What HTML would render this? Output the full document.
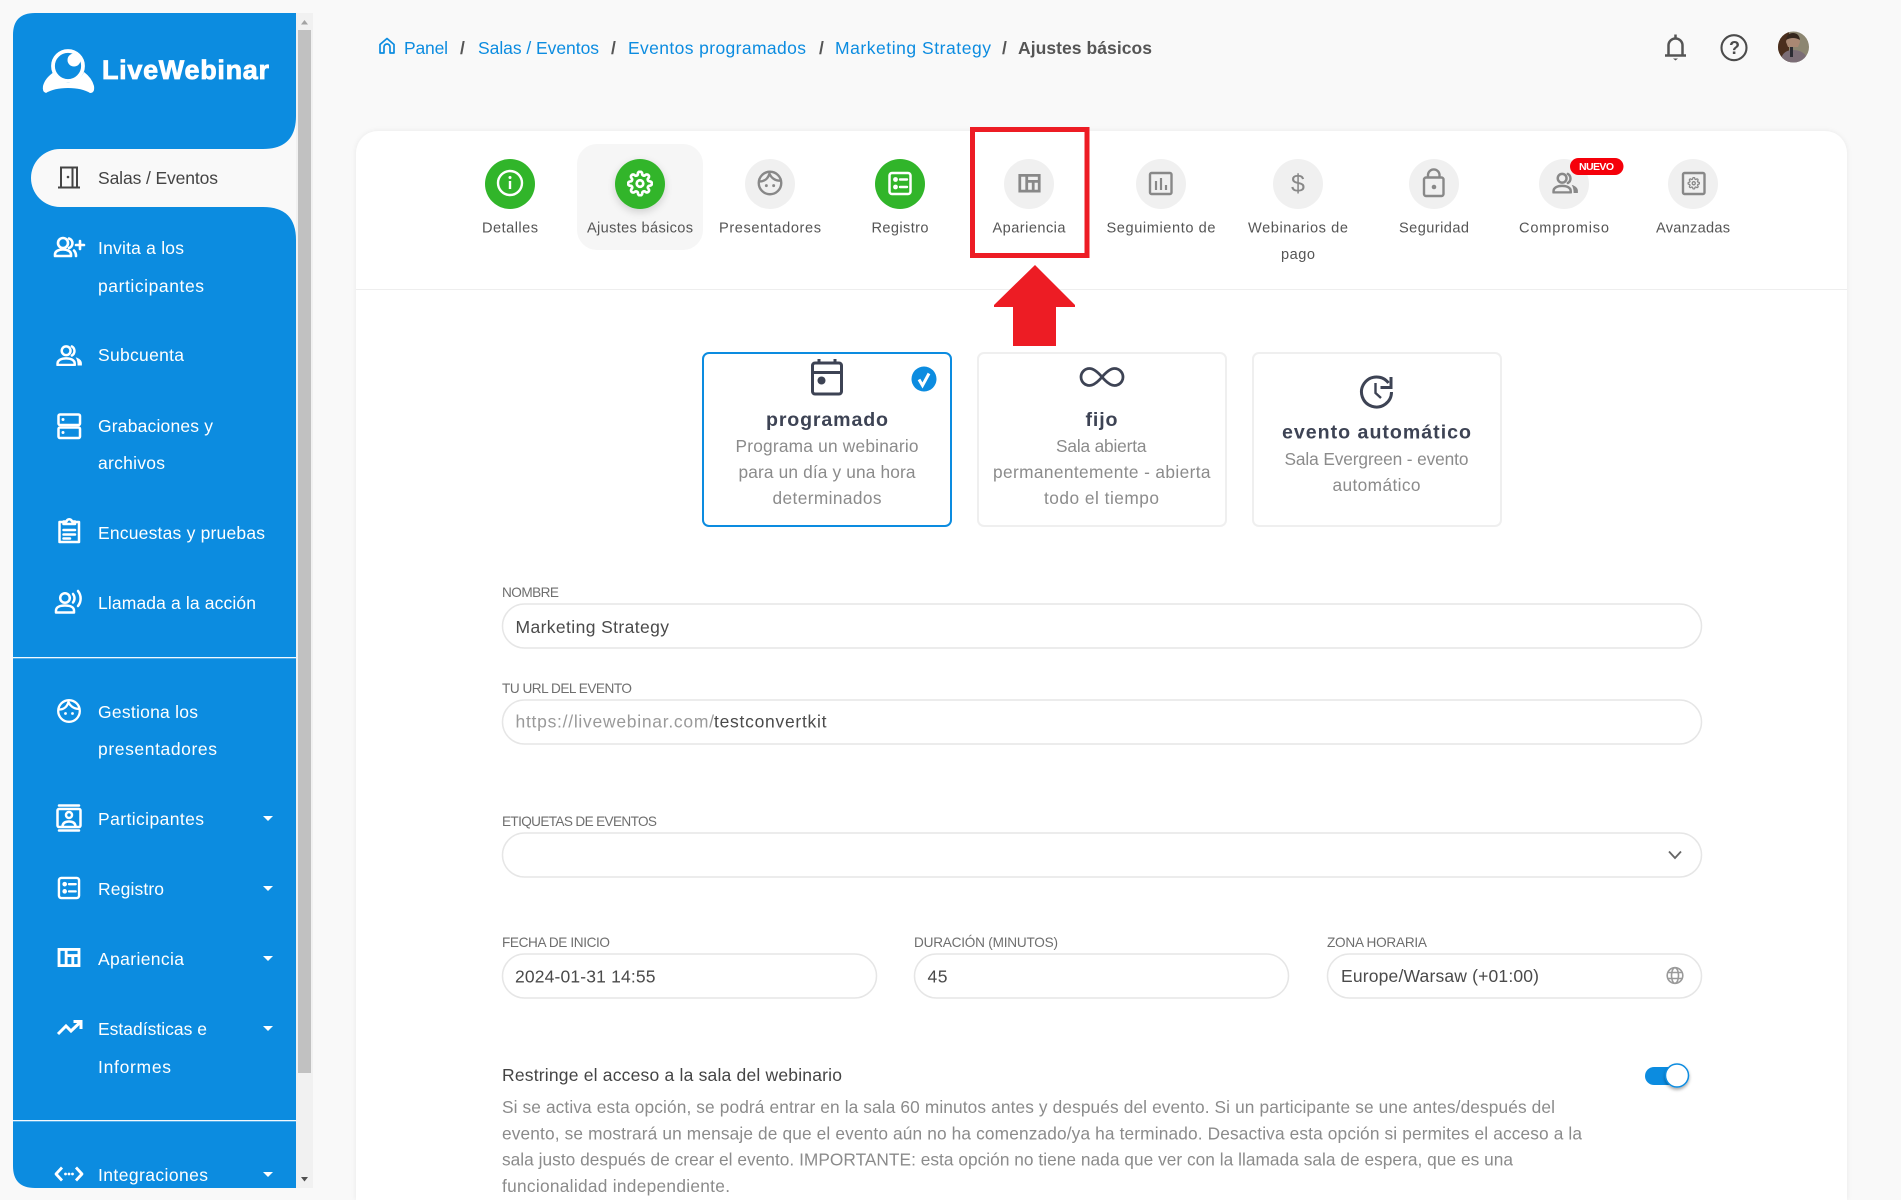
<!DOCTYPE html>
<html lang="es">
<head>
<meta charset="utf-8">
<title>Ajustes básicos</title>
<style>
html{margin:0;padding:0;width:1901px;height:1200px;overflow:hidden;background:#f9f9f9}
body{margin:0;padding:0;width:1901px;height:1200px;overflow:hidden;position:relative;background:#f9f9f9;font-family:"Liberation Sans",sans-serif}
.card{position:absolute;left:356px;top:131px;width:1491px;height:1069px;background:#fff;border-radius:22px 22px 0 0;box-shadow:0 0 6px rgba(0,0,0,.07)}
svg{position:absolute;left:0;top:0;display:block}
text{font-family:"Liberation Sans",sans-serif;font-size:17.5px}
.s text{fill:#fff}
.bc{fill:#0c8ce0}
.tab{font-size:14.6px;fill:#555}
.d{fill:#8b8b8b;font-size:17.3px}
.t{fill:#3d4354;font-size:19.6px;font-weight:bold}
.l{fill:#6e6e6e;font-size:13.6px}
.v{fill:#4a4a4a;font-size:17.5px}
.i{fill:#fff;stroke:#e6e6e6;stroke-width:1.5}
.o{fill:none;stroke:currentColor;stroke-width:2.2;stroke-linecap:round;stroke-linejoin:round}
</style>
</head>
<body>
<div class="card"></div>
<svg width="1901" height="1200" viewBox="0 0 1901 1200" xmlns="http://www.w3.org/2000/svg">
<defs>
<symbol id="face" viewBox="0 0 24 24"><g class="o" style="stroke-width:2.300"><circle cx="12" cy="12" r="10.800"/><path d="M2.500 10.500C6.500 10.500 10 8 11.500 3 13 7 17 9.800 21.500 9.800"/></g><circle cx="8.500" cy="14.500" r="1.400" fill="currentColor"/><circle cx="15.500" cy="14.500" r="1.400" fill="currentColor"/></symbol>
<symbol id="list" viewBox="0 0 24 24"><rect x="1.500" y="1.500" width="21" height="21" rx="2.500" class="o" style="stroke-width:2.500"/><circle cx="7.500" cy="8" r="2.400" fill="currentColor"/><circle cx="7.500" cy="15.500" r="2.400" fill="currentColor"/><path d="M12 8H19M12 15.500H19" class="o" style="stroke-width:2.400"/></symbol>
<symbol id="layout" viewBox="0 0 24 20"><path d="M1.500 1.500H22.500V18.500H1.500ZM9 1.500V18.500M9 8H22.500M16 8V18.500" fill="none" stroke="currentColor" stroke-width="3"/></symbol>
<symbol id="people" viewBox="0 0 28 22"><g class="o" style="stroke-width:2.600"><circle cx="11" cy="6" r="4.600"/><path d="M2 21V19.500C2 16 6 14 11 14S20 16 20 19.500V21Z"/><path d="M17 1.500A5.500 5.500 0 0 1 17 11"/></g><path d="M21 13C25 14 27.500 16.500 27.500 19V21.500H23C23 18 22.500 15.500 21 13Z" fill="currentColor"/></symbol>
<symbol id="gear" viewBox="0 0 24 24"><g fill="none" stroke="currentColor" stroke-width="2.500" stroke-linejoin="round"><circle cx="12" cy="12" r="3"/><path d="M19.400 15a1.650 1.650 0 0 0 .33 1.820l.06.06a2 2 0 0 1 0 2.830 2 2 0 0 1-2.830 0l-.06-.06a1.650 1.650 0 0 0-1.820-.33 1.650 1.650 0 0 0-1 1.510V21a2 2 0 0 1-2 2 2 2 0 0 1-2-2v-.09A1.650 1.650 0 0 0 9 19.400a1.650 1.650 0 0 0-1.820.33l-.06.06a2 2 0 0 1-2.830 0 2 2 0 0 1 0-2.830l.06-.06a1.650 1.650 0 0 0 .33-1.820 1.650 1.650 0 0 0-1.510-1H3a2 2 0 0 1-2-2 2 2 0 0 1 2-2h.09A1.650 1.650 0 0 0 4.600 9a1.650 1.650 0 0 0-.33-1.820l-.06-.06a2 2 0 0 1 0-2.830 2 2 0 0 1 2.830 0l.06.06a1.650 1.650 0 0 0 1.820.33H9a1.650 1.650 0 0 0 1-1.510V3a2 2 0 0 1 2-2 2 2 0 0 1 2 2v.09a1.650 1.650 0 0 0 1 1.510 1.650 1.650 0 0 0 1.820-.33l.06-.06a2 2 0 0 1 2.830 0 2 2 0 0 1 0 2.830l-.06.06a1.650 1.650 0 0 0-.33 1.820V9a1.650 1.650 0 0 0 1.510 1H21a2 2 0 0 1 2 2 2 2 0 0 1-2 2h-.09a1.650 1.650 0 0 0-1.510 1z"/></g></symbol>
<clipPath id="clipS"><rect x="0" y="0" width="296" height="1188"/></clipPath>
<clipPath id="clipA"><circle cx="1793.500" cy="47" r="15.500"/></clipPath>
<filter id="sh" x="-40%" y="-40%" width="180%" height="180%"><feDropShadow dx="0" dy="3" stdDeviation="4" flood-color="#000" flood-opacity=".16"/></filter>
<filter id="sh2" x="-40%" y="-40%" width="180%" height="180%"><feDropShadow dx="0" dy="2" stdDeviation="1.500" flood-color="#000" flood-opacity=".35"/></filter>
</defs>

<!-- scrollbar -->
<rect x="296" y="13" width="17" height="1175" fill="#f1f1f1"/>
<rect x="298" y="30" width="13" height="1043" fill="#c1c1c1"/>
<path d="M301 24.500L304.500 20 308 24.500Z" fill="#a3a3a3"/>
<path d="M301 1177L304.500 1181.500 308 1177Z" fill="#505050"/>

<!-- sidebar -->
<path d="M35 13H296V116Q296 149 263 149H60A29 29 0 0 0 60 207H263Q296 207 296 240V1188H35Q13 1188 13 1166V35Q13 13 35 13Z" fill="#0c8ce0"/>
<rect x="13" y="657" width="283" height="1.300" fill="#fff" opacity=".95"/>
<rect x="13" y="1120" width="283" height="1.300" fill="#fff" opacity=".95"/>

<!-- logo -->
<g fill="#fff">
<path d="M46 93Q42 92 43 86Q45 78 54 72Q58 81 68 83Q80 81 84 72Q92 78 94 86Q95 93 90 93Q82 88 68 88Q54 88 46 93Z"/>
<circle cx="68" cy="66" r="15" fill="none" stroke="#fff" stroke-width="3.800"/>
<circle cx="74" cy="60" r="6.500"/>
<text x="102" y="79" font-weight="bold" stroke="#fff" stroke-width=".8" style="font-size:27px" textLength="167" lengthAdjust="spacing">LiveWebinar</text>
</g>

<g class="s" clip-path="url(#clipS)">
<text x="98" y="184" style="fill:#444" textLength="120">Salas / Eventos</text>
<text x="98" y="254" textLength="86">Invita a los</text>
<text x="98" y="292" textLength="106">participantes</text>
<text x="98" y="361" textLength="86">Subcuenta</text>
<text x="98" y="432" textLength="115">Grabaciones y</text>
<text x="98" y="469" textLength="67">archivos</text>
<text x="98" y="539" textLength="167">Encuestas y pruebas</text>
<text x="98" y="609" textLength="158">Llamada a la acción</text>
<text x="98" y="718" textLength="100">Gestiona los</text>
<text x="98" y="755" textLength="119">presentadores</text>
<text x="98" y="825" textLength="106">Participantes</text>
<text x="98" y="895" textLength="66">Registro</text>
<text x="98" y="965" textLength="86">Apariencia</text>
<text x="98" y="1035" textLength="109">Estadísticas e</text>
<text x="98" y="1073" textLength="73">Informes</text>
<text x="98" y="1181" textLength="110">Integraciones</text>

<!-- carets -->
<g fill="#fff">
<path d="M263 816H273L268 821Z"/><path d="M263 886H273L268 891Z"/><path d="M263 956H273L268 961Z"/><path d="M263 1026H273L268 1031Z"/><path d="M263 1172H273L268 1177Z"/>
</g>

<!-- door -->
<path d="M58 187.500H80M61 187.500V167.500H72.500V187.500M72.500 167.500H77V187.500" fill="none" stroke="#444" stroke-width="2"/>
<circle cx="68" cy="177" r="1.300" fill="#444"/>

<g color="#fff">
<!-- invite -->
<g class="o" style="stroke-width:2.600">
<circle cx="63" cy="243" r="5"/><path d="M55 256V254.500C55 251 59 249.500 63 249.500S71 251 71 254.500V256Z"/><path d="M69 238.500A5 5 0 0 1 69 248M74 250.500C75.500 252 76 253.500 76 256"/><path d="M76 245H84M80 241V249"/>
</g>
<!-- subaccount -->
<use href="#people" x="55" y="345" width="28" height="21"/>
<!-- recordings -->
<g fill="none" stroke="#fff" stroke-width="2.500"><rect x="58.500" y="414.500" width="21.500" height="10.500" rx="1.500"/><rect x="58.500" y="427.500" width="21.500" height="10.500" rx="1.500"/></g>
<circle cx="63" cy="419.500" r="1.500" fill="#fff"/><circle cx="63" cy="432.500" r="1.500" fill="#fff"/>
<!-- surveys -->
<g class="o" style="stroke-width:2.500"><path d="M63.500 522H59.500V542H79V522H75M63.500 524V521.500H66.500A2.800 2.800 0 0 1 72 521.500H75V524Z"/><path d="M63.500 530H75M63.500 534.500H75M63.500 538.500H70"/></g>
<!-- cta -->
<g class="o" style="stroke-width:2.500"><circle cx="65" cy="598" r="4.800"/><path d="M56 612.500V610.500C56 607 60 605.500 65 605.500S74 607 74 610.500V612.500Z"/><path d="M73 594C75 596.500 75 600 73 602.500M78 591C81.500 595.500 81.500 601.500 78 606"/></g>
<!-- presenters -->
<use href="#face" x="57" y="699" width="24" height="24"/>
<!-- participants -->
<g class="o" style="stroke-width:2.500"><path d="M59 805.500H79M59 830.500H79"/><rect x="57.500" y="809" width="23" height="18" rx="1.500"/><circle cx="69" cy="815" r="3"/><path d="M62.500 826C63 822.500 65.500 821.500 69 821.500S75 822.500 75.500 826"/></g>
<!-- register -->
<use href="#list" x="57.500" y="876.500" width="23" height="23" style="color:#fff"/>
<!-- look -->
<use href="#layout" x="57.500" y="948" width="23" height="19"/>
<!-- stats -->
<path d="M58 1034L66 1026 71 1031 80.500 1022M73.500 1021.500H81V1029" fill="none" stroke="#fff" stroke-width="3"/>
<!-- integr -->
<g class="o" style="stroke-width:2.800;stroke-linecap:butt"><path d="M62 1167.500L56 1174 62 1180.500M76 1167.500L82 1174 76 1180.500"/></g>
<circle cx="65.500" cy="1174" r="1.400" fill="#fff"/><circle cx="69" cy="1174" r="1.400" fill="#fff"/><circle cx="72.500" cy="1174" r="1.400" fill="#fff"/>
</g>
</g>

<!-- breadcrumb -->
<path d="M380 53V44.500L387 38.500 394 44.500V53H390V47A3 3 0 0 0 384 47V53Z" fill="none" stroke="#0c8ce0" stroke-width="1.700" stroke-linejoin="round"/>
<g>
<text class="bc" x="404" y="54" textLength="44">Panel</text>
<text x="460" y="54" fill="#555" font-weight="bold">/</text>
<text class="bc" x="478" y="54" textLength="121">Salas / Eventos</text>
<text x="611" y="54" fill="#555" font-weight="bold">/</text>
<text class="bc" x="628" y="54" textLength="178">Eventos programados</text>
<text x="819" y="54" fill="#555" font-weight="bold">/</text>
<text class="bc" x="835" y="54" textLength="156">Marketing Strategy</text>
<text x="1002" y="54" fill="#555" font-weight="bold">/</text>
<text x="1018" y="54" fill="#555" font-weight="bold" textLength="134">Ajustes básicos</text>
</g>

<!-- top right -->
<g fill="none" stroke="#555" stroke-width="2.500"><path d="M1665 55.500H1686M1668.500 55V45.500A7 7 0 0 1 1682.500 45.500V55"/><path d="M1675.500 34.500V38"/></g>
<path d="M1673 58.500H1678L1675.500 60.500Z" fill="#555"/>
<circle cx="1734" cy="47.700" r="12.500" fill="none" stroke="#4c4c4c" stroke-width="2.100"/>
<text x="1729" y="54" fill="#4c4c4c" font-weight="bold" style="font-size:18px">?</text>
<g clip-path="url(#clipA)">
<rect x="1778" y="31" width="32" height="32" fill="#8c8671"/>
<rect x="1778" y="31" width="11" height="32" fill="#4b2f1e"/>
<path d="M1786 42Q1787 35 1793 35Q1799 35 1800 42L1798 47H1788Z" fill="#a98873"/>
<path d="M1786 40Q1787 33 1793 33Q1799 33 1800 40Q1793 36 1786 40Z" fill="#35271e"/>
<path d="M1782 63V56Q1785 50 1793 50Q1802 50 1806 56V63Z" fill="#7b6d76"/>
<rect x="1790" y="47" width="3" height="10" fill="#2b2b33"/>
</g>

<!-- tabs -->
<rect x="577" y="144" width="126" height="106" rx="20" fill="#f6f6f6"/>
<circle cx="510" cy="184" r="25" fill="#31b52a"/>
<circle cx="640" cy="184" r="25" fill="#31b52a" filter="url(#sh)"/>
<circle cx="770" cy="184" r="25" fill="#f0f0f0"/>
<circle cx="900" cy="184" r="25" fill="#31b52a"/>
<circle cx="1029" cy="184" r="25" fill="#f0f0f0"/>
<circle cx="1161" cy="184" r="25" fill="#f0f0f0"/>
<circle cx="1298" cy="184" r="25" fill="#f0f0f0"/>
<circle cx="1434" cy="184" r="25" fill="#f0f0f0"/>
<circle cx="1564" cy="184" r="25" fill="#f0f0f0"/>
<circle cx="1693" cy="184" r="25" fill="#f0f0f0"/>

<!-- info -->
<circle cx="510" cy="183" r="12" fill="none" stroke="#fff" stroke-width="2.400"/>
<path d="M510 181V189" stroke="#fff" stroke-width="2.400"/><circle cx="510" cy="177.500" r="1.500" fill="#fff"/>
<!-- gear -->
<use href="#gear" x="627" y="170.500" width="26" height="26" style="color:#fff"/>
<!-- face -->
<use href="#face" x="757.500" y="170.500" width="25" height="25" style="color:#888"/>
<!-- list -->
<use href="#list" x="888" y="171.500" width="24" height="24" style="color:#fff"/>
<!-- layout -->
<use href="#layout" x="1018" y="174" width="23" height="18.500" style="color:#888"/>
<!-- analytics -->
<rect x="1150" y="173" width="21.500" height="21" rx="1.500" fill="none" stroke="#888" stroke-width="2.400"/>
<path d="M1156 181V190M1161 178V190M1166 185V190" stroke="#888" stroke-width="2.200"/>
<!-- dollar -->
<text x="1291" y="192" fill="#888" style="font-size:25px">$</text>
<!-- lock -->
<rect x="1424" y="177.500" width="19.500" height="18.500" rx="2" fill="none" stroke="#888" stroke-width="2.400"/>
<path d="M1428 177V174.500A5.800 5.800 0 0 1 1439.500 174.500V177" fill="none" stroke="#888" stroke-width="2.400"/>
<circle cx="1434" cy="187" r="2.300" fill="#888"/>
<!-- people -->
<use href="#people" x="1551" y="172.500" width="28" height="21" style="color:#888"/>
<!-- advanced -->
<rect x="1683" y="173" width="21.500" height="21" rx="1.500" fill="none" stroke="#888" stroke-width="2.400"/>
<use href="#gear" x="1687.500" y="177" width="12.500" height="12.500" style="color:#888"/>
<!-- badge -->
<rect x="1570" y="158" width="53.500" height="17" rx="8.500" fill="#f5000a"/>
<text x="1579" y="170" fill="#fff" font-weight="bold" style="font-size:10.500px" textLength="35">NUEVO</text>

<text class="tab" x="482" y="232.500" textLength="56">Detalles</text>
<text class="tab" x="587" y="232.500" textLength="106">Ajustes básicos</text>
<text class="tab" x="719" y="232.500" textLength="102">Presentadores</text>
<text class="tab" x="871.500" y="232.500" textLength="57">Registro</text>
<text class="tab" x="992.500" y="232.500" textLength="73">Apariencia</text>
<text class="tab" x="1106.500" y="232.500" textLength="109">Seguimiento de</text>
<text class="tab" x="1248" y="232.500" textLength="100">Webinarios de</text>
<text class="tab" x="1281" y="259" textLength="34">pago</text>
<text class="tab" x="1399" y="232.500" textLength="70">Seguridad</text>
<text class="tab" x="1519" y="232.500" textLength="90">Compromiso</text>
<text class="tab" x="1656" y="232.500" textLength="74">Avanzadas</text>

<rect x="356" y="289" width="1491" height="1" fill="#eeeeee"/>

<!-- red annotation -->
<rect x="972.500" y="129.500" width="114.500" height="126" fill="none" stroke="#ed1c24" stroke-width="5"/>
<path d="M1035 265L1075 305V307H1056V346H1013V307H994V305Z" fill="#ed1c24"/>

<!-- type cards -->
<rect x="703" y="353" width="248" height="173" rx="6" fill="#fff" stroke="#0c8ce0" stroke-width="2"/>
<rect x="978" y="353" width="248" height="173" rx="6" fill="#fff" stroke="#efefef" stroke-width="2"/>
<rect x="1253" y="353" width="248" height="173" rx="6" fill="#fff" stroke="#efefef" stroke-width="2"/>

<!-- calendar -->
<g fill="none" stroke="#3d4354" stroke-width="3"><rect x="812.500" y="363" width="29" height="31" rx="2.500"/><path d="M812 372.500H842M819 359V364M835 359V364"/></g>
<circle cx="821.500" cy="380.500" r="4" fill="#3d4354"/>
<circle cx="924" cy="379" r="12.500" fill="#0c8ce0"/>
<path d="M919 379.500L922.500 385.500 929 373.500" fill="none" stroke="#fff" stroke-width="3"/>
<!-- infinity -->
<path d="M1102 377C1096 370 1092 368.500 1089.500 368.500A8.500 8.500 0 0 0 1089.500 385.500C1092 385.500 1096 384 1102 377C1108 370 1112 368.500 1114.500 368.500A8.500 8.500 0 0 1 1114.500 385.500C1112 385.500 1108 384 1102 377Z" fill="none" stroke="#3d4354" stroke-width="2.800"/>
<!-- auto clock -->
<path d="M1388.500 383A15 15 0 1 0 1391.500 392" fill="none" stroke="#3d4354" stroke-width="3"/>
<path d="M1391 377V387.500H1380.500" fill="none" stroke="#3d4354" stroke-width="3"/>
<path d="M1375.500 383V393L1381 398" fill="none" stroke="#3d4354" stroke-width="2.400"/>

<text class="t" x="766" y="426" textLength="122">programado</text>
<text class="d" x="735.500" y="452" textLength="183">Programa un webinario</text>
<text class="d" x="738.500" y="478" textLength="177">para un día y una hora</text>
<text class="d" x="772.500" y="504" textLength="109">determinados</text>

<text class="t" x="1085.500" y="426" textLength="32">fijo</text>
<text class="d" x="1056" y="452" textLength="90.500">Sala abierta</text>
<text class="d" x="993" y="478" textLength="217.500">permanentemente - abierta</text>
<text class="d" x="1044" y="504" textLength="115">todo el tiempo</text>

<text class="t" x="1282" y="438.500" textLength="189">evento automático</text>
<text class="d" x="1284.500" y="465" textLength="184">Sala Evergreen - evento</text>
<text class="d" x="1332.500" y="491" textLength="88">automático</text>

<!-- form -->
<text class="l" x="502" y="597" textLength="57">NOMBRE</text>
<rect class="i" x="502.500" y="604" width="1199" height="44" rx="22"/>
<text class="v" x="515.500" y="633" textLength="153.500">Marketing Strategy</text>

<text class="l" x="502" y="693" textLength="130">TU URL DEL EVENTO</text>
<rect class="i" x="502.500" y="700" width="1199" height="44" rx="22"/>
<text x="515.500" y="727.500" fill="#9a9a9a" textLength="198.500">https://livewebinar.com/</text>
<text class="v" x="714" y="727.500" textLength="112.500">testconvertkit</text>

<text class="l" x="502" y="826" textLength="155">ETIQUETAS DE EVENTOS</text>
<rect class="i" x="502.500" y="833" width="1199" height="44" rx="22"/>
<path d="M1669 851.500L1675 858 1681 851.500" fill="none" stroke="#666" stroke-width="1.800"/>

<text class="l" x="502" y="947" textLength="108">FECHA DE INICIO</text>
<rect class="i" x="502.500" y="954" width="374" height="44" rx="22"/>
<text class="v" x="515" y="982.500" textLength="140.500">2024-01-31 14:55</text>

<text class="l" x="914" y="947" textLength="144">DURACIÓN (MINUTOS)</text>
<rect class="i" x="914.500" y="954" width="374" height="44" rx="22"/>
<text class="v" x="927.500" y="982.500" textLength="20">45</text>

<text class="l" x="1327" y="947" textLength="100">ZONA HORARIA</text>
<rect class="i" x="1327.500" y="954" width="374" height="44" rx="22"/>
<text class="v" x="1341" y="982" textLength="198">Europe/Warsaw (+01:00)</text>
<g fill="none" stroke="#9a9a9a" stroke-width="1.600"><circle cx="1675" cy="975.500" r="7.800"/><ellipse cx="1675" cy="975.500" rx="3.500" ry="7.800"/><path d="M1668 972.500H1682M1668 978.500H1682"/></g>

<text x="502" y="1081" fill="#444" textLength="340">Restringe el acceso a la sala del webinario</text>
<rect x="1645" y="1067" width="34" height="18" rx="9" fill="#0c8ce0"/>
<circle cx="1677" cy="1075.500" r="11.500" fill="#fff" stroke="#0c8ce0" stroke-width="1.500" filter="url(#sh2)"/>

<text class="d" x="502" y="1113" textLength="1053">Si se activa esta opción, se podrá entrar en la sala 60 minutos antes y después del evento. Si un participante se une antes/después del</text>
<text class="d" x="502" y="1139.500" textLength="1080">evento, se mostrará un mensaje de que el evento aún no ha comenzado/ya ha terminado. Desactiva esta opción si permites el acceso a la</text>
<text class="d" x="502" y="1165.500" textLength="1011">sala justo después de crear el evento. IMPORTANTE: esta opción no tiene nada que ver con la llamada sala de espera, que es una</text>
<text class="d" x="502" y="1192" textLength="228">funcionalidad independiente.</text>
</svg>
</body>
</html>
